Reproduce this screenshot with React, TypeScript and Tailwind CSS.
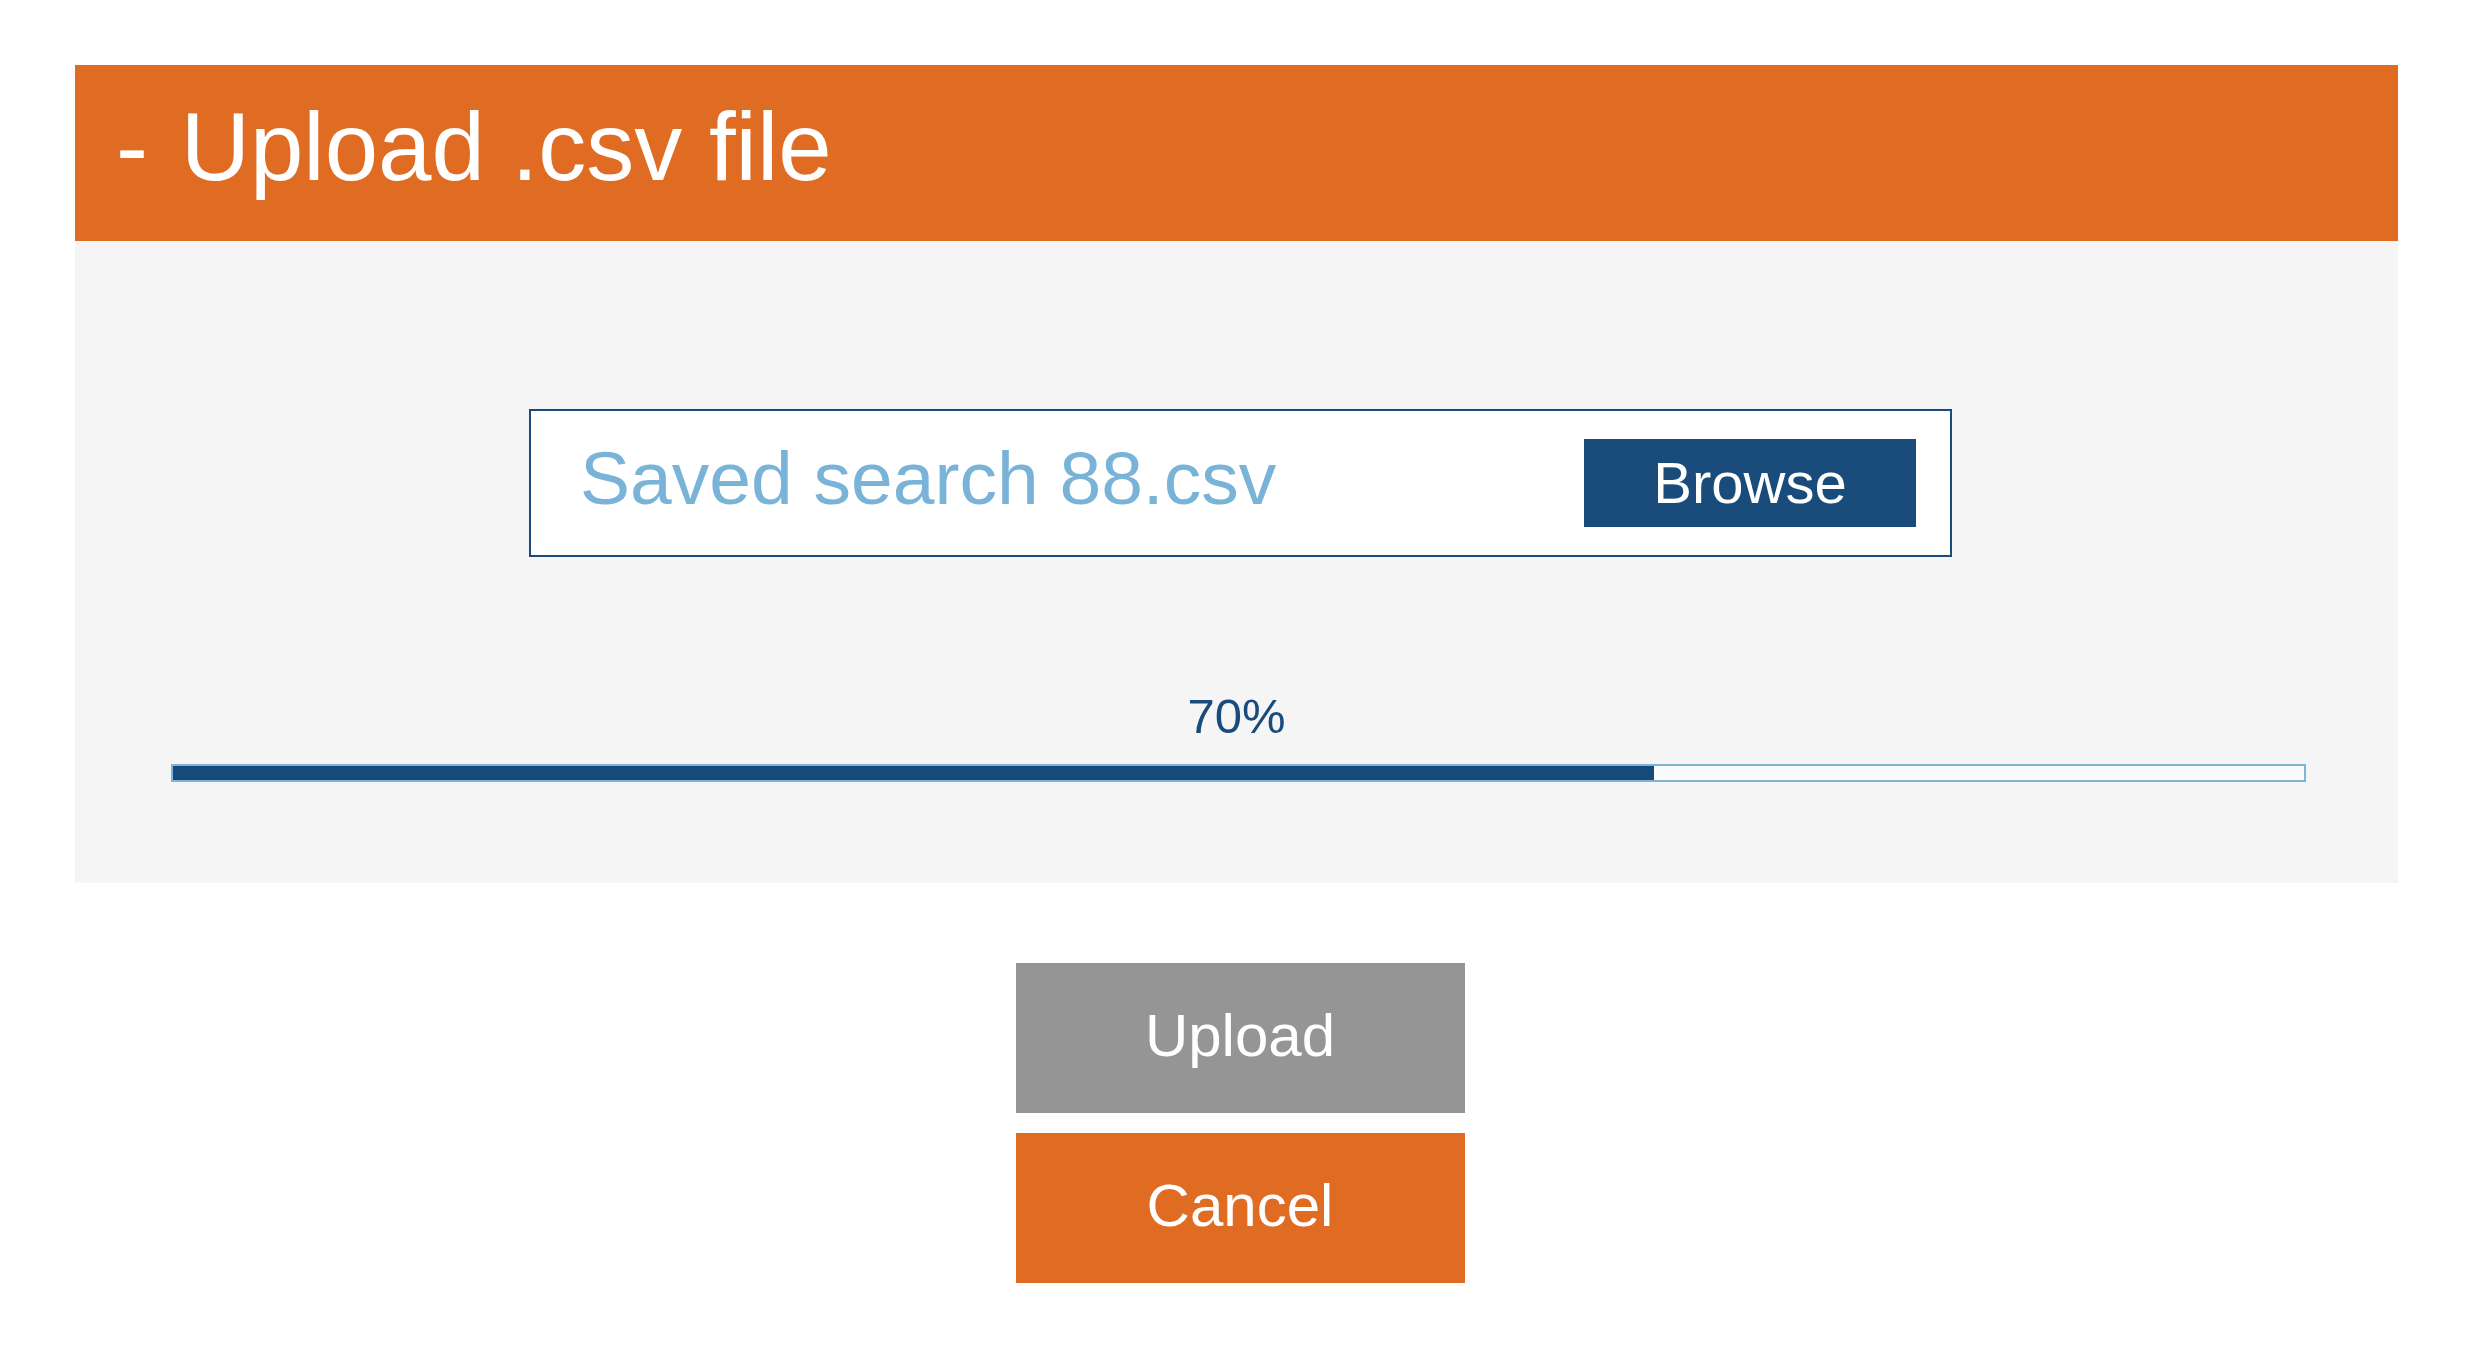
import React from "react";

export default function App() {
  const progress = 70;
  return (
    <div className="w-[2480px] h-[1364px] bg-white font-['Liberation_Sans',Arial,sans-serif] pt-[65px]">
      <div className="ml-[75px] w-[2323px]">
        <div className="h-[176px] bg-[#e06c23] pl-[41px] pt-[34px]">
          <div className="text-[96px] leading-none text-white">
            <span className="mr-[6px]">-</span> Upload .csv file
          </div>
        </div>
        <div className="bg-[#f5f5f5] h-[642px] pt-[168px]">
          <div className="ml-[454px] w-[1423px] h-[148px] border-2 border-[#194b7b] bg-white flex items-center justify-between pl-[49px] pr-[34px]">
            <span className="text-[75px] leading-none text-[#7ab3d8] mb-[10px]">Saved search 88.csv</span>
            <button className="w-[332px] h-[88px] bg-[#194b7b] text-white text-[58px] leading-none flex items-center justify-center">
              Browse
            </button>
          </div>
          <div className="mt-[135px] text-center text-[49px] leading-none text-[#194b7b]">70%</div>
          <div className="mt-[23px] ml-[96px] w-[2135px] h-[18px] border-2 border-[#80b3d9] bg-[#fafafa] pr-[15px]">
            <div className="h-full bg-[#174a7a]" style={{ width: `${progress}%` }} />
          </div>
        </div>
      </div>
      <div className="mt-[80px] flex flex-col items-center gap-[20px]">
        <button className="w-[449px] h-[150px] bg-[#959595] text-white text-[60px] leading-none flex items-center justify-center pb-[4px]">
          Upload
        </button>
        <button className="w-[449px] h-[150px] bg-[#e06c23] text-white text-[60px] leading-none flex items-center justify-center pb-[4px]">
          Cancel
        </button>
      </div>
    </div>
  );
}
